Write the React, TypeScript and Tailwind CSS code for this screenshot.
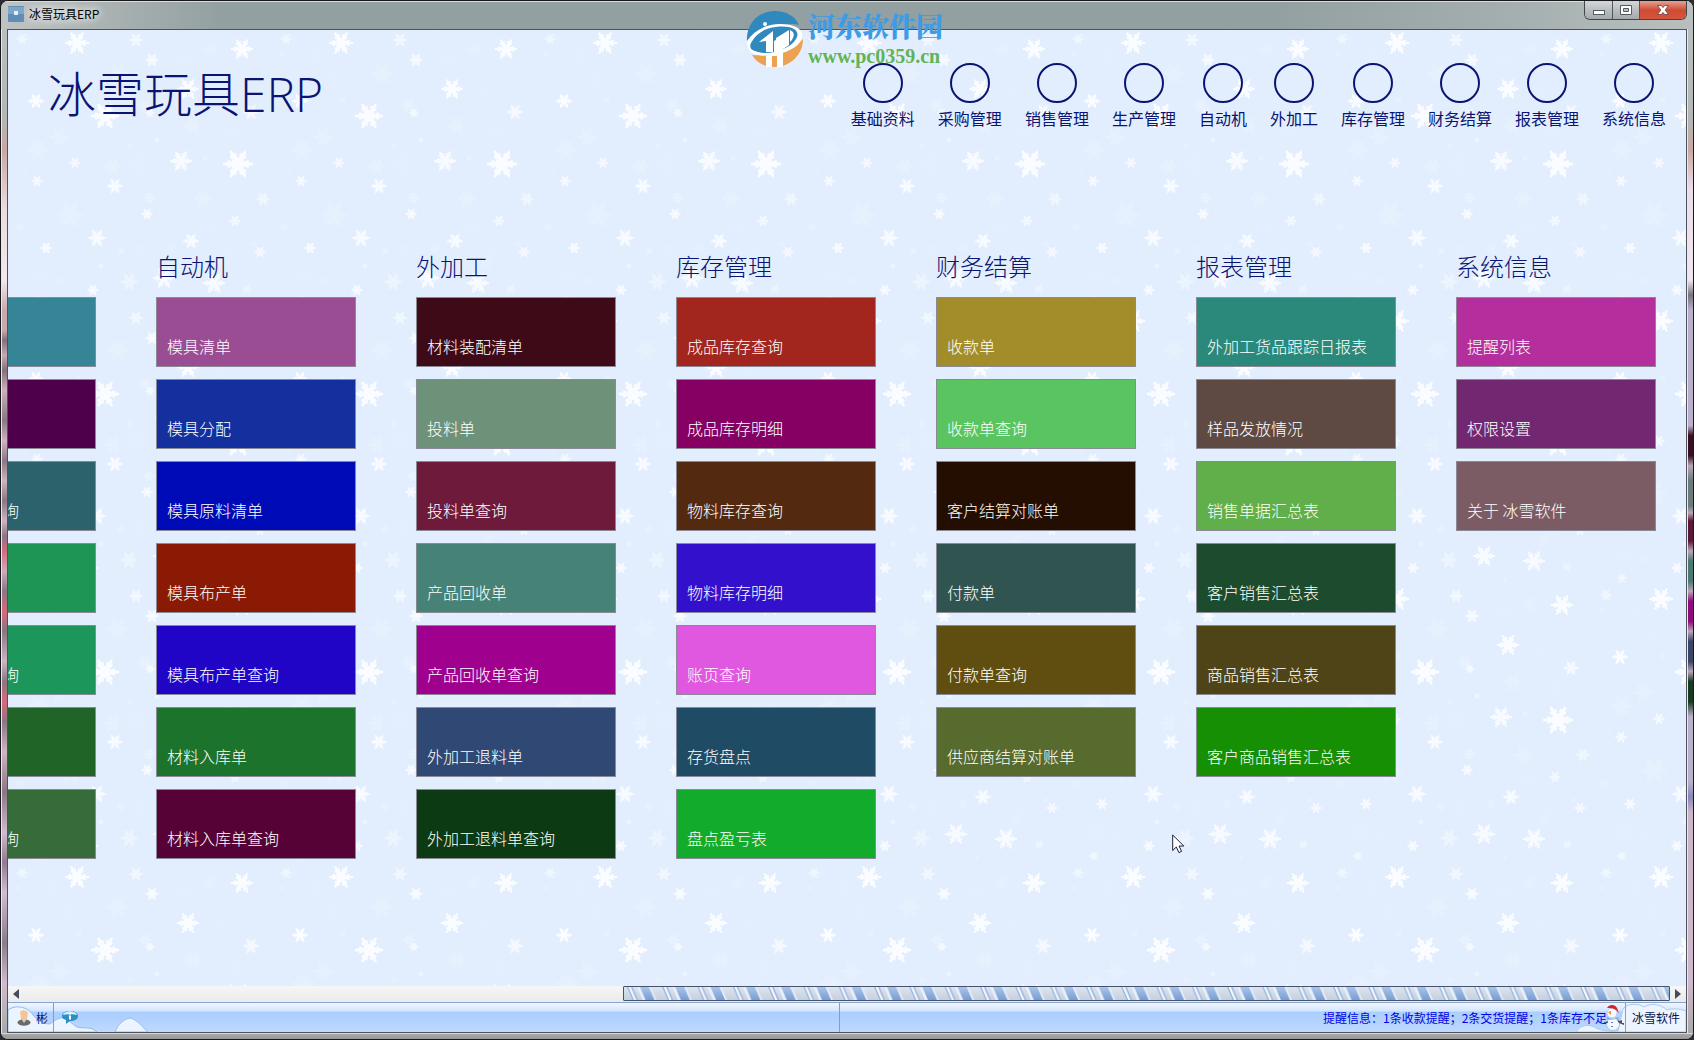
import { useId } from 'react'

type Tile = { label: string; color: string }
type Group = { id: string; title: string; tiles: Tile[] }

const navItems = [
  '基础资料',
  '采购管理',
  '销售管理',
  '生产管理',
  '自动机',
  '外加工',
  '库存管理',
  '财务结算',
  '报表管理',
  '系统信息',
]

const groups: Group[] = [
  {
    id: 'production',
    title: '',
    tiles: [
      { label: '', color: 'bg-[#358596]' },
      { label: '', color: 'bg-[#4e004a]' },
      { label: '生产布产单查询', color: 'bg-[#2b626b]' },
      { label: '', color: 'bg-[#1f9555]' },
      { label: '生产领料单查询', color: 'bg-[#1d965b]' },
      { label: '', color: 'bg-[#206428]' },
      { label: '生产入库单查询', color: 'bg-[#356c3a]' },
    ],
  },
  {
    id: 'machine',
    title: '自动机',
    tiles: [
      { label: '模具清单', color: 'bg-[#9a4d93]' },
      { label: '模具分配', color: 'bg-[#142f9e]' },
      { label: '模具原料清单', color: 'bg-[#000bb8]' },
      { label: '模具布产单', color: 'bg-[#8a1a04]' },
      { label: '模具布产单查询', color: 'bg-[#2005c6]' },
      { label: '材料入库单', color: 'bg-[#1c732b]' },
      { label: '材料入库单查询', color: 'bg-[#570237]' },
    ],
  },
  {
    id: 'outsourcing',
    title: '外加工',
    tiles: [
      { label: '材料装配清单', color: 'bg-[#3e0a18]' },
      { label: '投料单', color: 'bg-[#6e917a]' },
      { label: '投料单查询', color: 'bg-[#6d1a3b]' },
      { label: '产品回收单', color: 'bg-[#478277]' },
      { label: '产品回收单查询', color: 'bg-[#9f018e]' },
      { label: '外加工退料单', color: 'bg-[#2f4874]' },
      { label: '外加工退料单查询', color: 'bg-[#0c3a13]' },
    ],
  },
  {
    id: 'stock',
    title: '库存管理',
    tiles: [
      { label: '成品库存查询', color: 'bg-[#a2261d]' },
      { label: '成品库存明细', color: 'bg-[#850062]' },
      { label: '物料库存查询', color: 'bg-[#532a0f]' },
      { label: '物料库存明细', color: 'bg-[#3310cb]' },
      { label: '账页查询', color: 'bg-[#df58df]' },
      { label: '存货盘点', color: 'bg-[#1f4b64]' },
      { label: '盘点盈亏表', color: 'bg-[#13ab2b]' },
    ],
  },
  {
    id: 'finance',
    title: '财务结算',
    tiles: [
      { label: '收款单', color: 'bg-[#a38d2b]' },
      { label: '收款单查询', color: 'bg-[#5ac560]' },
      { label: '客户结算对账单', color: 'bg-[#240e01]' },
      { label: '付款单', color: 'bg-[#30544f]' },
      { label: '付款单查询', color: 'bg-[#604e11]' },
      { label: '供应商结算对账单', color: 'bg-[#566b2d]' },
    ],
  },
  {
    id: 'report',
    title: '报表管理',
    tiles: [
      { label: '外加工货品跟踪日报表', color: 'bg-[#2a897a]' },
      { label: '样品发放情况', color: 'bg-[#5e4a43]' },
      { label: '销售单据汇总表', color: 'bg-[#60af4b]' },
      { label: '客户销售汇总表', color: 'bg-[#1d4b2d]' },
      { label: '商品销售汇总表', color: 'bg-[#4e4418]' },
      { label: '客户商品销售汇总表', color: 'bg-[#178f05]' },
    ],
  },
  {
    id: 'system',
    title: '系统信息',
    tiles: [
      { label: '提醒列表', color: 'bg-[#b42e9e]' },
      { label: '权限设置', color: 'bg-[#712870]' },
      { label: '关于 冰雪软件', color: 'bg-[#7b5c65]' },
    ],
  },
]

// x, y, radius, opacity of every flake inside one 264x278 wallpaper tile
const flakes: [number, number, number, number][] = [
  [97, 238, 9, 0.85], [121, 251, 4, 0.5], [101, 266, 3, 0.6], [140, 251, 10, 0.2], [171, 248, 6, 0.35],
  [191, 241, 8, 0.85], [230, 253, 8, 0.15], [223, 263, 7, 0.3], [260, 252, 6, 0.8], [254, 244, 4, 0.35],
  [46, 248, 6, 0.85], [93, 12, 6, 0.85], [129, 4, 9, 0.6], [164, 0, 11, 0.85], [214, 5, 11, 0.85],
  [247, 11, 5, 0.6], [171, 32, 2, 0.4], [185, 23, 2, 0.5], [40, 276, 9, 0.2], [59, 3, 5, 0.3],
  [38, 22, 5, 0.75], [136, 40, 7, 0.75], [22, 39, 6, 0.7], [18, 54, 3, 0.4], [77, 43, 12, 0.9],
  [242, 49, 11, 0.9], [211, 49, 8, 0.35], [183, 58, 9, 0.15], [152, 60, 7, 0.85], [134, 56, 4, 0.2],
  [118, 73, 11, 0.4], [53, 56, 10, 0.15], [188, 89, 11, 0.9], [222, 93, 8, 0.15], [68, 79, 8, 0.15],
  [36, 101, 8, 0.9], [79, 100, 4, 0.4], [251, 112, 8, 0.8], [105, 116, 14, 0.9], [145, 106, 7, 0.45],
  [150, 113, 5, 0.8], [193, 126, 10, 0.4], [234, 133, 9, 0.2], [157, 140, 3, 0.7], [59, 137, 10, 0.35],
  [38, 150, 11, 0.35], [75, 163, 6, 0.8], [181, 161, 11, 0.85], [238, 164, 15, 0.9], [205, 158, 3, 0.5],
  [130, 146, 4, 0.4], [113, 167, 9, 0.4], [137, 164, 13, 0.15], [115, 186, 8, 0.85], [37, 181, 6, 0.8],
  [25, 174, 4, 0.3], [263, 199, 7, 0.7], [203, 199, 9, 0.4], [149, 198, 6, 0.5], [147, 214, 6, 0.85],
  [165, 202, 3, 0.3], [235, 221, 6, 0.75], [70, 215, 13, 0.4], [20, 227, 5, 0.4], [208, 227, 8, 0.2],
]

const TILE_W = 264
const TILE_H = 278

// flakes close to an edge are repeated on the opposite side so the tile is seamless
const wrapped = flakes.flatMap(([x, y, r, o]) =>
  [-TILE_W, 0, TILE_W].flatMap((dx) =>
    [-TILE_H, 0, TILE_H]
      .map((dy) => [x + dx, y + dy, r, o])
      .filter(([fx, fy]) => fx > -r && fx < TILE_W + r && fy > -r && fy < TILE_H + r),
  ),
)

function SnowWallpaper() {
  const id = useId()
  return (
    <svg className="absolute inset-0 w-full h-full" aria-hidden="true">
      <defs>
        <g id={`${id}flake`} fill="#fff">
          {[0, 60, 120, 180, 240, 300].map((a) => (
            <path
              key={a}
              transform={`rotate(${a})`}
              d="M0 -2L4.500 -1.500L6 -2.600L7.600 -2.400L7.600 -1.200L10.500 -.9V.9L7.600 1.200L7.600 2.400L6 2.600L4.500 1.500L0 2z"
            />
          ))}
          <circle r="4.600" />
        </g>
        <pattern id={`${id}snow`} x="-8" y="-30" width={TILE_W} height={TILE_H} patternUnits="userSpaceOnUse">
          {wrapped.map(([x, y, r, o], i) => (
            <use
              key={i}
              href={`#${id}flake`}
              opacity={o * o}
              transform={`translate(${x} ${y}) scale(${r / 10.5})`}
            />
          ))}
        </pattern>
      </defs>
      <rect width="100%" height="100%" fill={`url(#${id}snow)`} />
    </svg>
  )
}

function Watermark() {
  return (
    <div className="absolute left-[745px] top-[7px] flex items-center gap-1 pointer-events-none">
      <svg width="58" height="60" viewBox="0 0 58 60" aria-hidden="true">
        <path d="M1 33C0 16 12 3 29 3c11 0 20 5 24 14c-9-3-18 1-24 5L8 38z" fill="#3088bd" />
        <path d="M57 31c0 15-12 28-29 28C18 59 10 54 6 47c20 2 40-5 51-16z" fill="#eda050" />
        <path d="M1 33C8 22 21 16 34 16c16 0 24 6 22 14C53 42 24 53 6 45C2 43 1 37 1 33z" fill="#fff" />
        <path d="M5 35C10 26 18 20 30 19c17-2 25 4 20 12c-3 5-8 8-13 10V28l-9 5v11c-7 2-14 1-19-1c-4-1-6-4-4-8z" fill="#3088bd" />
        <path d="M13 34l14-11v21h-7V33zM30 30l13-8v15l-6 4v18h-6V48h-5v11h-6V48l10-4z" fill="#fff" />
        <path d="M44 22c5 2 5 7 0 12z" fill="#fff" />
        <circle cx="19" cy="16" r="2" fill="#fff" />
      </svg>
      <div className="flex flex-col">
        <span className="font-['Noto_Serif_CJK_SC','Noto_Sans_CJK_SC',serif] font-black text-[27px] leading-9 text-[#3f9be3]">
          河东软件园
        </span>
        <span className="font-['Liberation_Serif',serif] font-bold text-[20px] leading-6 text-[#62b356]">
          www.pc0359.cn
        </span>
      </div>
    </div>
  )
}

function TitleBar() {
  const control =
    'h-full flex items-center justify-center border-r border-[#50585c] bg-linear-to-b from-[#d3d7d9] via-[#b9bec1] via-50% to-[#a3aaad]'
  return (
    <header className="h-7 shrink-0 flex items-start justify-between pl-[7px] pr-[6px] bg-[linear-gradient(90deg,#bfc4c3_0,#a9b1b1_110px,#93a0a1_220px,#93a0a1_75%,#a3adad_88%,#b9bfbf_100%)] shadow-[inset_0_1px_0_#d9dddd]">
      <div className="flex items-center gap-[5px] h-full pb-0.5">
        <svg width="16" height="16" viewBox="0 0 16 16" aria-hidden="true">
          <rect width="16" height="16" rx="1" fill="#5f8db5" />
          <rect y="1" width="16" height="7" fill="#7ba6c9" />
          <rect x="6" y="5" width="4" height="4" fill="#dff1fb" />
        </svg>
        <h2 className="text-[12px] leading-4 text-black [text-shadow:0_0_8px_#fff,0_0_8px_#fff]">冰雪玩具ERP</h2>
      </div>
      <div className="flex h-[19px] rounded-b-md overflow-hidden border border-t-0 border-[#40474a]">
        <button aria-label="最小化" className={`w-7 ${control}`}>
          <svg width="14" height="12" viewBox="0 0 14 12">
            <rect x="1.5" y="6.5" width="11" height="4" fill="#fff" stroke="#545b63" />
          </svg>
        </button>
        <button aria-label="还原" className={`w-[27px] ${control}`}>
          <svg width="14" height="12" viewBox="0 0 14 12">
            <path fillRule="evenodd" d="M1.500 1.500h11v9h-11zM4.500 4.500v3h5v-3z" fill="#fff" stroke="#545b63" />
          </svg>
        </button>
        <button
          aria-label="关闭"
          className="w-[46px] h-full flex items-center justify-center bg-linear-to-b from-[#e5a092] via-[#cf4a33] via-50% to-[#d4553b]"
        >
          <svg width="14" height="12" viewBox="0 0 14 12">
            <path
              d="M1.500 1.500h3.800L7 3.600l1.700-2.100h3.800L9.200 6l3.300 4.500H8.700L7 8.400l-1.700 2.100H1.500L4.800 6z"
              fill="#fff"
              stroke="#6d3b3b"
              strokeWidth=".8"
            />
          </svg>
        </button>
      </div>
    </header>
  )
}

function NavButton({ label }: { label: string }) {
  return (
    <button className="flex flex-col items-center gap-[3px] text-[#0a1472]">
      <span className="size-10 rounded-full border-2 border-[#0a1472]" />
      <span className="text-base leading-6 whitespace-nowrap">{label}</span>
    </button>
  )
}

function TileGroup({ group }: { group: Group }) {
  return (
    <section className="w-[200px] shrink-0">
      <h2 className="h-8 mb-[15px] text-2xl leading-8 font-light text-[#0a1472]">{group.title}</h2>
      <div className="flex flex-col gap-3">
        {group.tiles.map((tile, i) => (
          <button
            key={i}
            className={`h-[70px] px-2.5 pb-2 flex items-end border border-[#8a8a96] text-base leading-6 font-light text-white whitespace-nowrap ${tile.color}`}
          >
            {tile.label}
          </button>
        ))}
      </div>
    </section>
  )
}

function ScrollBar() {
  const id = useId()
  return (
    <div className="h-4 shrink-0 flex items-center bg-linear-to-b from-[#f6f6f6] to-[#ebebeb]">
      <button aria-label="向左滚动" className="w-4 h-full flex items-center justify-center">
        <svg width="6" height="10" viewBox="0 0 6 10">
          <path d="M6 0v10L0 5z" fill="#444b5c" />
        </svg>
      </button>
      <div className="flex-1 h-full flex">
        <div className="grow-[599] basis-0" />
        <div className="grow-[1046] basis-0 min-w-0 h-[15px] border border-[#46526e] rounded-[1px] overflow-hidden bg-[#ccd7e6]">
          <svg className="block w-full h-full" aria-hidden="true">
            <defs>
              <linearGradient id={`${id}band`} x1="0" y1="0" x2="0" y2="1">
                <stop offset="0" stopColor="#a9c4e8" />
                <stop offset="1" stopColor="#739bd4" />
              </linearGradient>
              <linearGradient id={`${id}base`} x1="0" y1="0" x2="0" y2="1">
                <stop offset="0" stopColor="#dde4ee" />
                <stop offset="1" stopColor="#c3cedd" />
              </linearGradient>
              <pattern id={`${id}bar`} width="35.3" height="14" patternUnits="userSpaceOnUse">
                <rect width="36" height="14" fill={`url(#${id}base)`} />
                {[-35.3, 0, 35.3].map((x) => (
                  <g key={x} transform={`translate(${x} 0)`}>
                    <path d="M3 0h1.500l6 14h-1.500z" fill="#92b3e0" />
                    <path d="M4.500 0h2l6 14h-2z" fill="#f4f8fd" />
                    <path d="M7 0h1.500l6 14h-1.500z" fill="#9dbae3" />
                    <path d="M13 0h3l6 14h-3z" fill="#e9f0f9" />
                    <path d="M16 0h9l6 14h-9z" fill={`url(#${id}band)`} />
                    <path d="M25 0h2l6 14h-2z" fill="#e4ecf7" />
                  </g>
                ))}
              </pattern>
            </defs>
            <rect width="100%" height="100%" fill={`url(#${id}bar)`} />
          </svg>
        </div>
      </div>
      <button aria-label="向右滚动" className="w-4 h-full flex items-center justify-center">
        <svg width="6" height="10" viewBox="0 0 6 10">
          <path d="M0 0v10l6-5z" fill="#444b5c" />
        </svg>
      </button>
    </div>
  )
}

function Snowman() {
  return (
    <svg width="22" height="28" viewBox="0 0 22 28" className="relative shrink-0" aria-hidden="true">
      <circle cx="10" cy="20" r="6.500" fill="#f4faff" stroke="#a8c6e8" />
      <circle cx="9" cy="9" r="5" fill="#f4faff" stroke="#b9d0ea" />
      <path d="M4 4c2-4 8-4 10 0l2 5-3-3c-3-2-6-2-9-2z" fill="#d2232a" />
      <path d="M5 8l3-1 0 4z" fill="#f0873c" />
      <path d="M4 13c3 2 8 2 11 0l1 3-4-1c-3 1-6 1-8 0z" fill="#7fa9de" />
      <path d="M14 16l3 1 2-1v3h2v2l-5-2z" fill="#4a4e58" />
      <path d="M1 19l4-1M9 18v1M9 22v1" stroke="#34598f" strokeWidth="1.500" />
    </svg>
  )
}

function StatusBar() {
  const cell = 'relative h-full flex items-center border-r border-[#7f9fc8]'
  return (
    <footer className="relative h-[30px] shrink-0 flex items-center border-t border-[#8ba6cb] bg-[linear-gradient(#f0f6ff_0,#d3e5ff_8px,#abcffe_9px,#b2d2fe_18px,#bfdaff_100%)] text-[12px]">
      <svg className="absolute left-0 bottom-0" width="144" height="29" viewBox="0 0 144 29" aria-hidden="true">
        <path
          d="M0 7c8-6 20-3 25 5c4 5 10 9 17 9c4-3 9-7 14-6c5 2 8 6 13 9c6 2 15-1 20 5H0zM107 29c3-8 9-13 15-14c7 1 12 9 18 14z"
          fill="#ecf5ff"
          stroke="#93bbe9"
        />
      </svg>
      <svg className="absolute right-0 bottom-0" width="110" height="29" viewBox="0 0 110 29" aria-hidden="true">
        <path d="M0 29c5-8 14-8 20-4c6 3 16 4 22 3l5-22c4-6 16-6 21-2c8-5 18-2 23 3c6-2 13-1 19 1v21z" fill="#ecf5ff" stroke="#a9caf0" />
      </svg>
      <div className={`w-[46px] pl-[9px] gap-1 ${cell}`}>
        <svg width="15" height="16" viewBox="0 0 15 16" className="shrink-0" aria-hidden="true">
          <ellipse cx="7" cy="12.500" rx="6.500" ry="3.300" fill="#6d6a6a" />
          <path d="M3 2c2-3 7-2 8 1l-1 6c-1 2-4 2-6 0z" fill="#f3c497" />
          <path d="M5 10l2 3 2-3z" fill="#c9ccd2" />
        </svg>
        <span className="text-[#0a1472]">彬</span>
      </div>
      <div className={`flex-1 ${cell}`}>
        <svg width="16" height="15" viewBox="0 0 16 15" className="ml-2" aria-hidden="true">
          <path d="M8 1c5 0 8 2 8 5s-3 5-8 5l-4 3 0-4C1 9 0 8 0 6c0-3 3-5 8-5z" fill="#2a8fc8" />
          <path d="M1 5c1-5 13-5 14 0c-3-1-11-1-14 0z" fill="#d2effb" />
          <path d="M7 3h2v1.500H7zM6.500 5.500H9v4H7v-3z" fill="#fff" />
        </svg>
      </div>
      <div className={`flex-1 justify-end ${cell}`}>
        <p className="-mr-1 text-[#0000e6] whitespace-nowrap">提醒信息：1条收款提醒；2条交货提醒；1条库存不足</p>
        <Snowman />
      </div>
      <span className="relative w-[60px] text-center text-[#0b1450]">冰雪软件</span>
    </footer>
  )
}

export default function App() {
  return (
    <div className="min-h-screen bg-[#2b2b33] font-['Noto_Sans_CJK_SC',sans-serif]">
      <div className="relative min-h-screen flex flex-col rounded-lg overflow-hidden border border-[#16181c] bg-[#a9a9a9]">
        <TitleBar />

        <div className="flex-1 flex">
          <div className="w-1.5 shrink-0 border-l border-[#e8e8e8] bg-[linear-gradient(#b9bfbf_0,#b4b6b4_9%,#c9a8a3_12%,#ecdcdf_18%,#f3e9ec_25%,#c9a9ad_28%,#c9a9ad_30%,#85707c_31%,#c9a9b3_32.500%,#85707c_34%,#cbb0ba_36%,#8b7683_39%,#d0b3c0_41%,#8b7683_43%,#d0b3c0_45%,#8b7683_47%,#d0b3c0_49%,#8b7683_50.500%,#d76a80_52%,#cfa9b8_54%,#8b7683_56%,#d76a80_58%,#8b7683_60%,#d0b3c4_63%,#8b7683_65%,#d76a80_67%,#8b7683_69%,#d0b3c4_72%,#8b7683_76%,#d3bad0_80%,#907c8e_83%,#d3bad0_86%,#8b7d8b_91%,#cfbacb_95%,#a9a9a9_100%)]" />
          <div className="flex-1 min-w-0 flex flex-col border border-[#4d535a]">
            <main className="relative flex-1 min-w-0 overflow-hidden bg-[#e2eefe]">
              <SnowWallpaper />
              <div className="relative flex flex-col">
                <div className="flex justify-between items-start pl-10 pr-5 pt-8">
                  <h1 className="text-5xl leading-[64px] font-['Open_Sans','Noto_Sans_CJK_SC',sans-serif] font-light text-[#0a1472]">
                    冰雪玩具ERP
                  </h1>
                  <nav className="flex gap-[23px] pt-px">
                    {navItems.map((item) => (
                      <NavButton key={item} label={item} />
                    ))}
                  </nav>
                </div>
                <div className="flex justify-end gap-[60px] pt-[120px] pr-[30px]">
                  {groups.map((group) => (
                    <TileGroup key={group.id} group={group} />
                  ))}
                </div>
              </div>
              <svg className="absolute left-[1164px] top-[804px]" width="14" height="20" viewBox="0 0 14 20" aria-hidden="true">
                <path d="M.7 1v15.500l3.600-3.500 2.600 5.600 2.700-1.200L7 12h4.800z" fill="#fff" stroke="#1b1f3a" />
              </svg>
            </main>
            <ScrollBar />
            <StatusBar />
          </div>
          <div className="w-1.5 shrink-0 border-l border-[#e8e8e8] bg-[linear-gradient(#b9bfbf_0,#b4b6b4_9%,#c9a8a3_12%,#ecdcea_16%,#f0e6ef_25%,#77737f_26.5%,#b9aecb_28%,#b9aecb_39.5%,#3a0f20_40.5%,#3a0f20_42.5%,#b8a5ba_43.500%,#6a7b7a_45%,#6a7b7a_47.5%,#b8a5ba_48.2%,#5c1838_49%,#5c1838_51%,#b8a5ba_52%,#4c7874_53%,#4c7874_55%,#b8a5ba_56%,#8f0a7c_57%,#8f0a7c_59%,#b8a5ba_60%,#3a4568_61%,#3a4568_63%,#b8a5ba_64%,#173a20_65%,#173a20_67%,#b9b0cc_68.500%,#b9b0cc_75%,#8587bb_76.500%,#ccb4cb_78%,#cfb8cc_95%,#a9a9a9_100%)]" />
        </div>

        <div className="h-1.5 shrink-0 border-t border-[#d5d5d5] bg-linear-to-b from-[#a8a8a8] to-[#979797]" />
        <Watermark />
      </div>
    </div>
  )
}
